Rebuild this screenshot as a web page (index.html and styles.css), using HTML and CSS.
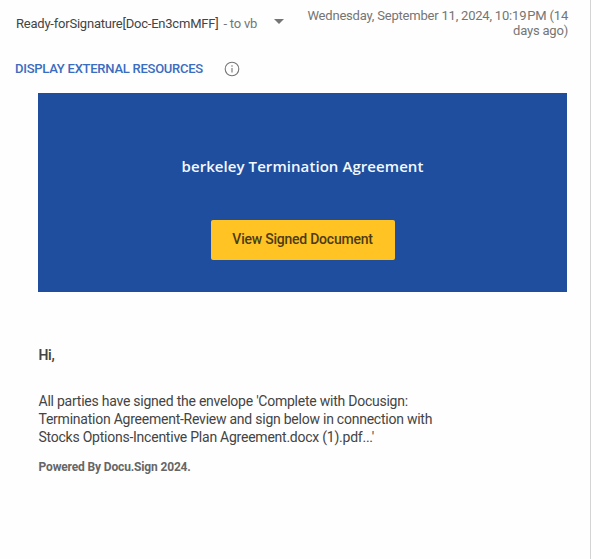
FILE: index.html
```html
<!DOCTYPE html>
<html lang="en">
<head>
<meta charset="utf-8">
<title>Message</title>
<link rel="stylesheet" href="styles.css">
</head>
<body>
<main class="message">
  <header class="head">
    <div class="sender"><span class="name">Ready-forSignature[Doc-En3cmMFF]</span><span class="to">- to vb</span>
      <svg class="caret" viewBox="0 0 10 5"><path d="M0 0h10L5 5z"/></svg>
    </div>
    <div class="date">Wednesday, September 11, 2024, 10:19&#8202;PM (14<br>days ago)</div>
  </header>
  <div class="resources">
    <span class="display">DISPLAY EXTERNAL RESOURCES</span>
    <svg class="info" viewBox="0 0 16 16"><circle cx="8" cy="8" r="6.8"/><path d="M8 7v4.5M8 4.3v1.4"/></svg>
  </div>
  <section class="banner">
    <h1 class="title">berkeley Termination Agreement</h1>
    <div class="button"><span class="label">View Signed Document</span></div>
  </section>
  <section class="body">
    <p class="greeting">Hi,</p>
    <p class="text">All parties have signed the envelope 'Complete with Docusign:<br>Termination Agreement-Review and sign below in connection with<br>Stocks Options-Incentive Plan Agreement.docx (1).pdf...'</p>
    <p class="powered">Powered By Docu.Sign 2024.</p>
  </section>
</main>
</body>
</html>
```
FILE: styles.css
```css
* { box-sizing: border-box; }
body { margin: 0; background: #fefefe; font-family: Roboto, sans-serif; }
.message { width: 591px; height: 559px; border-right: 1px solid #d4d4d4; overflow: hidden; }
.head { display: flex; justify-content: space-between; height: 56px; padding: 8px 22px 0 16px; }
.sender { display: flex; align-items: center; height: 31px; font-size: 13px; white-space: nowrap; }
.name { color: #444; letter-spacing: -0.22px; }
.to { margin-left: 5px; color: #757575; letter-spacing: -0.22px; }
.caret { width: 10px; height: 5px; margin: -5px 0 0 16.5px; fill: #757575; }
.date { font-size: 13px; line-height: 15px; color: #757575; text-align: right; white-space: nowrap; letter-spacing: -0.2px; }
.resources { display: flex; align-items: center; height: 26px; padding-left: 15px; }
.display { margin-top: -2px; font-size: 13px; color: #3a6cc0; font-weight: 500; white-space: nowrap; letter-spacing: -0.25px; }
.info { width: 16px; height: 16px; margin-left: 21.2px; fill: none; stroke: #757575; stroke-width: 1.1; }
.banner { display: flex; flex-direction: column; align-items: center; width: 529px; height: 199px; margin: 11px 0 0 38px; padding-top: 61px; background: #1f4e9f; }
.title { margin: 0; font: 600 15px/24px "Open Sans", sans-serif; color: #f4f8ff; white-space: nowrap; letter-spacing: 0.07px; }
.button { display: flex; align-items: center; justify-content: center; width: 184px; height: 40px; margin-top: 42px; padding-bottom: 2px; border-radius: 2px; background: #ffc423; }
.label { font-size: 14px; font-weight: 500; color: #4c3b18; white-space: nowrap; letter-spacing: -0.23px; }
.body { padding: 54px 0 0 38.5px; color: #444; }
.greeting { margin: 0; font-size: 14px; line-height: 18px; font-weight: 600; letter-spacing: -0.3px; }
.text { margin: 28px 0 0; font-size: 14px; line-height: 18px; white-space: nowrap; letter-spacing: -0.24px; }
.powered { margin: 13px 0 0; font-size: 12px; line-height: 16px; font-weight: 700; color: #666; letter-spacing: -0.15px; }
```
